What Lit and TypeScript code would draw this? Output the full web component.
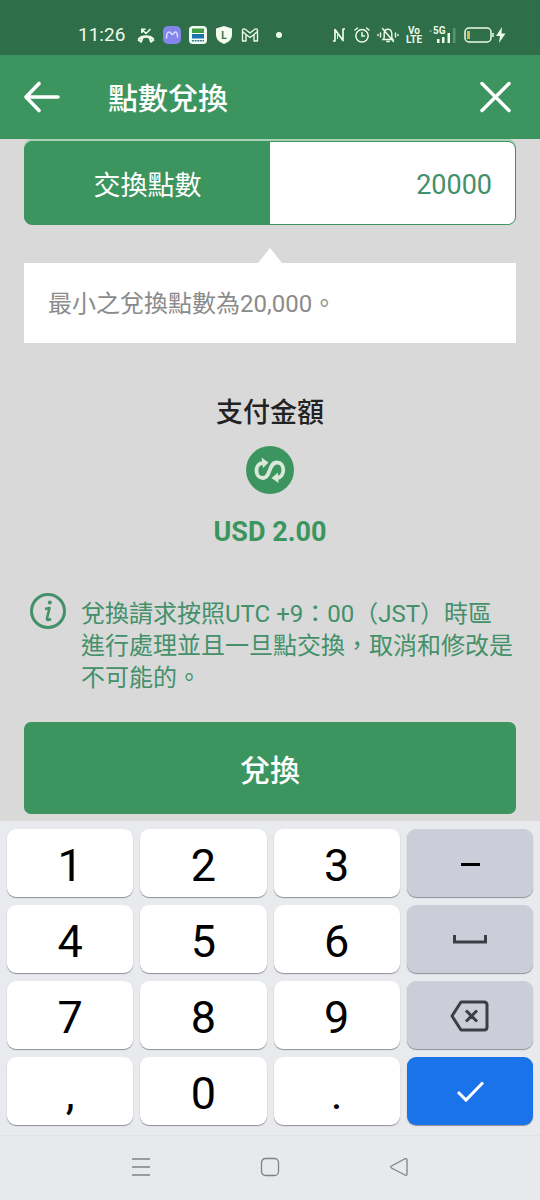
import { LitElement, html, css, svg } from "lit";
import { customElement, state } from "lit/decorators.js";

@customElement("status-bar")
class StatusBar extends LitElement {
  static styles = css`
    :host {
      display: flex;
      align-items: center;
      justify-content: space-between;
      box-sizing: border-box;
      height: 55px;
      padding: 14px 34px 0 78px;
      background: #2e6e48;
      color: #eefbe8;
      font-family: Roboto, "Noto Sans", sans-serif;
    }
    .group {
      display: flex;
      align-items: center;
      gap: 8px;
    }
    .time {
      font-size: 19px;
      line-height: 24px;
      margin-right: 4px;
    }
    .right {
      gap: 7px;
    }
    svg {
      display: block;
      overflow: visible;
    }
    .dot {
      margin-left: 9px;
      width: 6px;
      height: 6px;
      border-radius: 50%;
      background: currentColor;
    }
    .tiny {
      font-size: 10px;
      font-weight: 700;
      font-family: Roboto, sans-serif;
    }
  `;

  render() {
    return html`
      <div class="group">
        <span class="time">11:26</span>
        <svg width="18" height="18" viewBox="0 0 18 18" fill="none" stroke="currentColor" aria-hidden="true">
          <path d="M1.500 13.500 C5 9.500 13 9.500 16.500 13.500" stroke-width="2.600" />
          <path d="M1 13.500 L4 15.800 L5.500 12 M17 13.500 L14 15.800 L12.500 12" stroke-width="2" stroke-linejoin="round" />
          <path d="M13.500 3 L9 7.500 L4.800 3.400 M4.800 7 V3.200 H8.600" stroke-width="1.600" />
        </svg>
        <svg width="18" height="18" viewBox="0 0 18 18" fill="none" aria-hidden="true">
          <rect width="18" height="18" rx="5" fill="#8485ea" />
          <path d="M3.500 12 C3.500 7.500 5 6 6.500 6 C8 6 8 8.500 9.500 8.500 C11 8.500 10.500 6 12.200 6 C14 6 14.500 9 14.500 11" stroke="#d9dcff" stroke-width="1.500" stroke-linecap="round" />
        </svg>
        <svg width="18" height="18" viewBox="0 0 18 18" aria-hidden="true">
          <rect width="18" height="18" rx="4" fill="#f2fbf2" />
          <rect x="3" y="2.500" width="12" height="4.500" fill="#3f9c45" />
          <rect x="3" y="8" width="12" height="4.500" fill="#1c72ae" />
          <path d="M3 14.800 H15" stroke="#3d7f93" stroke-width="1.400" stroke-dasharray="2 .6" />
        </svg>
        <svg width="18" height="18" viewBox="0 0 18 18" aria-hidden="true">
          <path d="M9 0 L17 2.500 V9 C17 13.500 13 16.500 9 18 C5 16.500 1 13.500 1 9 V2.500 Z" fill="#f4fdf0" />
          <text class="tiny" x="9" y="12.500" text-anchor="middle" fill="#2e6e48">L</text>
        </svg>
        <svg width="18" height="18" viewBox="0 0 18 18" fill="none" stroke="currentColor" stroke-width="1.400" stroke-linejoin="round" aria-hidden="true">
          <path d="M1.500 15 V4.500 C1.500 2.500 3.500 2.500 4.500 3.500 L9 7 L13.500 3.500 C14.500 2.500 16.500 2.500 16.500 4.500 V15 H13 V8.500 L9 11.500 L5 8.500 V15 Z M5 8.500 L1.500 5.500 M13 8.500 L16.500 5.500" />
        </svg>
        <span class="dot"></span>
      </div>
      <div class="group right">
        <svg width="14" height="14" viewBox="0 0 14 14" fill="none" stroke="currentColor" stroke-width="1.700" stroke-linejoin="round" aria-hidden="true">
          <path d="M0 13 H2 V1.500 L10 12.500 V1 H12" />
          <path d="M4.500 6.500 V11" stroke-width="1" />
        </svg>
        <svg width="16" height="16" viewBox="0 0 16 16" fill="none" stroke="currentColor" stroke-width="1.500" stroke-linecap="round" aria-hidden="true">
          <circle cx="8" cy="8.800" r="6.200" />
          <path d="M8 5.500 V9 H10.500 M1 3 L3.500 1 M15 3 L12.500 1" />
        </svg>
        <svg width="22" height="16" viewBox="0 0 22 16" fill="none" stroke="currentColor" stroke-width="1.400" stroke-linecap="round" aria-hidden="true">
          <path d="M6 12.500 H16 L14.800 10.500 V6.500 C14.800 3 12.500 2.300 11 2.300 C9.500 2.300 7.200 3 7.200 6.500 V10.500 Z M9.800 14.500 H12.200 M5.500 1.500 L16.500 14.500 M3.500 6 V10 M1 7.500 V8.500 M18.500 6 V10 M21 7.500 V8.500" />
        </svg>
        <svg width="16" height="18" viewBox="0 0 16 18" fill="currentColor" aria-hidden="true">
          <text class="tiny" x="8" y="8" text-anchor="middle">Vo</text>
          <text class="tiny" x="8" y="17" text-anchor="middle">LTE</text>
        </svg>
        <svg width="28" height="18" viewBox="0 0 28 18" fill="currentColor" aria-hidden="true">
          <text class="tiny" x="4" y="8">5G</text>
          <path d="M8 13 h2.500 v4 h-2.500 z M13 11 h2.500 v6 h-2.500 z M18.500 7 h2.500 v10 h-2.500 z" />
          <path d="M24 2 h2.500 v15 h-2.500 z M0 4 h3 v2 h-3 z" opacity=".25" />
        </svg>
        <svg width="42" height="16" viewBox="0 0 42 16" fill="none" aria-hidden="true">
          <rect x="1" y="1" width="26" height="14" rx="4" stroke="currentColor" stroke-width="1.500" />
          <rect x="3" y="4" width="3" height="8" fill="#d9b45c" />
          <path d="M29 6 V10" stroke="currentColor" stroke-width="1.500" />
          <path d="M38 0 L32 9 H36 L35 16 L41.500 6.500 H37.500 Z" fill="currentColor" />
        </svg>
      </div>
    `;
  }
}

type Key = { id: string; label: string; kind: "digit" | "side" | "enter" };

const KEYS: Key[] = [
  { id: "1", label: "1", kind: "digit" },
  { id: "2", label: "2", kind: "digit" },
  { id: "3", label: "3", kind: "digit" },
  { id: "-", label: "", kind: "side" },
  { id: "4", label: "4", kind: "digit" },
  { id: "5", label: "5", kind: "digit" },
  { id: "6", label: "6", kind: "digit" },
  { id: "space", label: "", kind: "side" },
  { id: "7", label: "7", kind: "digit" },
  { id: "8", label: "8", kind: "digit" },
  { id: "9", label: "9", kind: "digit" },
  { id: "backspace", label: "", kind: "side" },
  { id: ",", label: ",", kind: "digit" },
  { id: "0", label: "0", kind: "digit" },
  { id: ".", label: ".", kind: "digit" },
  { id: "enter", label: "", kind: "enter" },
];

const KEY_ICONS: Record<string, unknown> = {
  "-": svg`<path d="M12 22.500 H31" stroke="#000" stroke-width="3" />`,
  space: svg`<path d="M5.500 17 V24 H36.500 V17" stroke="#3b3e44" stroke-width="3" />`,
  backspace: svg`<path d="M12 8 H35 Q38 8 38 11 V33 Q38 36 35 36 H12 L3 22 Z M17 16.500 L28 27.500 M28 16.500 L17 27.500" stroke="#3b3e44" stroke-width="3" stroke-linejoin="round" />`,
  enter: svg`<path d="M9 22 L17 30 L34 12.500" stroke="#fff" stroke-width="3" />`,
};

@customElement("number-pad")
class NumberPad extends LitElement {
  static styles = css`
    :host {
      display: grid;
      grid-template-columns: repeat(4, minmax(0, 1fr));
      grid-auto-rows: 68px;
      gap: 8px 7px;
      padding: 8px 7px 10px;
      background: #e9eaed;
    }
    .key {
      display: flex;
      align-items: center;
      justify-content: center;
      margin: 0;
      padding: 5px 0 0;
      border: 0;
      border-radius: 9px;
      background: #fff;
      box-shadow: 0 1px 1px #8f9196;
      color: #000;
      font: 400 45px/60px Roboto, "Noto Sans", sans-serif;
    }
    .side {
      background: #cbced8;
      padding: 0;
    }
    .enter {
      background: #1a73e8;
      padding: 0;
    }
    svg {
      display: block;
    }
  `;

  private press(id: string) {
    this.dispatchEvent(new CustomEvent("key-press", { detail: id }));
  }

  render() {
    return KEYS.map(
      (k) => html`<button class="key ${k.kind}" type="button" aria-label=${k.id} @click=${() => this.press(k.id)}>
        ${KEY_ICONS[k.id]
          ? html`<svg width="42" height="42" viewBox="0 0 42 42" fill="none" aria-hidden="true">${KEY_ICONS[k.id]}</svg>`
          : k.label}
      </button>`
    );
  }
}

@customElement("app-root")
class AppRoot extends LitElement {
  static styles = css`
    :host {
      display: flex;
      flex-direction: column;
      min-height: 100vh;
      background: #d9d9d9;
      font-family: Roboto, "Noto Sans CJK TC", sans-serif;
      text-spacing-trim: space-all;
    }
    svg {
      display: block;
      flex: none;
    }
    button {
      font-family: inherit;
      border: 0;
      margin: 0;
      padding: 0;
    }
    .app-bar {
      display: flex;
      align-items: center;
      height: 84px;
      padding: 0 27px 0 24px;
      background: #3c955e;
      color: #fff;
    }
    .icon-button {
      background: none;
      color: inherit;
    }
    .title {
      flex: 1;
      margin: 0 0 0 48px;
      padding-top: 4px;
      font-size: 30px;
      line-height: 44px;
      font-weight: 500;
    }
    .content {
      flex: 1;
      display: flex;
      flex-direction: column;
      padding: 0 24px 7px;
    }
    .field {
      display: flex;
      height: 84px;
      box-sizing: border-box;
      border: 1px solid #3c955e;
      border-radius: 8px;
      background: #3c955e;
      box-shadow: 0 -2px 0 #a9d3b6;
      margin-top: 2px;
    }
    .field-label,
    .field-input {
      width: 50%;
      min-width: 0;
      box-sizing: border-box;
      font-size: 27px;
      line-height: 40px;
    }
    .field-label {
      display: flex;
      align-items: center;
      justify-content: center;
      padding-top: 5px;
      color: #fff;
    }
    .field-input {
      border: 0;
      border-radius: 0 7px 7px 0;
      padding: 4px 23px 0;
      outline: 0;
      background: #fff;
      color: #43906a;
      text-align: right;
      font-family: inherit;
    }
    .note {
      margin: 23px 0 0;
      display: flex;
      flex-direction: column;
    }
    .pointer {
      align-self: center;
      border: 12px solid transparent;
      border-top: 0;
      border-bottom: 15px solid #fff;
    }
    .note-text {
      margin: 0;
      padding: 25px 24px 23px;
      background: #fff;
      color: #8b8b8b;
      font-size: 24px;
      line-height: 32px;
    }
    .payment {
      display: flex;
      flex-direction: column;
      align-items: center;
      margin-top: 50px;
    }
    .payment-title {
      margin: 0 0 13px;
      color: #222;
      font-size: 27px;
      line-height: 40px;
      font-weight: 500;
    }
    .amount {
      margin: 18px 0 0;
      color: #3c955e;
      font-size: 27px;
      line-height: 40px;
      font-weight: 700;
    }
    .notice {
      display: flex;
      gap: 15px;
      margin: 41px 3px 0 6px;
      color: #43906a;
    }
    .notice-text {
      flex: 1;
      margin: 5px 0 0;
      font-size: 24px;
      line-height: 32px;
    }
    .submit {
      margin-top: 28px;
      height: 92px;
      padding-top: 5px;
      border-radius: 7px;
      background: #3c955e;
      color: #fff;
      font-size: 30px;
      line-height: 44px;
      font-weight: 500;
    }
    .nav {
      display: flex;
      justify-content: space-around;
      align-items: center;
      height: 61px;
      padding: 0 76px 4px;
      background: #e8e9ed;
      border-top: 1px solid #e1e2e5;
      color: #808185;
    }
  `;

  @state() private points = "20000";

  private onKey(e: CustomEvent<string>) {
    const id = e.detail;
    if (id === "backspace") this.points = this.points.slice(0, -1);
    else if (/^\d$/.test(id)) this.points += id;
  }

  private get amount() {
    return (Number(this.points || 0) / 10000).toFixed(2);
  }

  render() {
    return html`
      <status-bar></status-bar>
      <header class="app-bar">
        <button class="icon-button" type="button" aria-label="返回">
          <svg width="36" height="32" viewBox="0 0 36 32" fill="none" stroke="currentColor" stroke-width="3.600" stroke-linecap="round" stroke-linejoin="round">
            <path d="M34 16 H2 M15 2.500 L2 16 L15 29.500" />
          </svg>
        </button>
        <h1 class="title">點數兌換</h1>
        <button class="icon-button" type="button" aria-label="關閉">
          <svg width="36" height="32" viewBox="0 0 36 32" fill="none" stroke="currentColor" stroke-width="3.500" stroke-linecap="round">
            <path d="M5 2.500 L32 29.500 M32 2.500 L5 29.500" />
          </svg>
        </button>
      </header>
      <main class="content">
        <div class="field">
          <label class="field-label" for="points">交換點數</label>
          <input
            class="field-input"
            id="points"
            type="text"
            inputmode="none"
            .value=${this.points}
            @input=${(e: Event) => (this.points = (e.target as HTMLInputElement).value)}
          />
        </div>
        <div class="note">
          <span class="pointer"></span>
          <p class="note-text">最小之兌換點數為20,000。</p>
        </div>
        <section class="payment">
          <h2 class="payment-title">支付金額</h2>
          <svg width="48" height="48" viewBox="0 0 48 48" aria-hidden="true">
            <circle cx="24" cy="24" r="24" fill="#3c955e" />
            <path d="M17 17 C13 17 10.500 20.500 10.500 24.500 C10.500 28.800 13 32 16.800 32 C25 32 22 16.500 31 16.500 C35 16.500 37.300 20 37.300 24 C37.300 28 35 31.500 31 32" fill="none" stroke="#d9e8d9" stroke-width="3.800" />
            <path d="M15.500 11.500 L22.500 16.500 L17 22 Z M32 26.500 L25.500 32 L32.500 37 Z" fill="#d9e8d9" />
          </svg>
          <p class="amount">USD ${this.amount}</p>
        </section>
        <div class="notice">
          <svg width="36" height="38" viewBox="0 0 36 38" fill="none" stroke="currentColor" aria-hidden="true">
            <circle cx="18" cy="18" r="16.500" stroke-width="3" />
            <circle cx="19.800" cy="9.500" r="2" fill="currentColor" stroke="none" />
            <path d="M15 16 L19.500 15 L17 25.500 Q16.500 28 21 26" stroke-width="2.600" stroke-linejoin="round" />
          </svg>
          <p class="notice-text">兌換請求按照UTC +9：00（JST）時區進行處理並且一旦點交換，取消和修改是不可能的。</p>
        </div>
        <button class="submit" type="button">兌換</button>
      </main>
      <number-pad @key-press=${this.onKey}></number-pad>
      <nav class="nav">
        <button class="icon-button" type="button" aria-label="選單">
          <svg width="20" height="20" viewBox="0 0 20 20" fill="none" stroke="currentColor" stroke-width="1.500">
            <path d="M1 2 H19 M1 10 H19 M1 18 H19" />
          </svg>
        </button>
        <button class="icon-button" type="button" aria-label="主畫面">
          <svg width="20" height="20" viewBox="0 0 20 20" fill="none" stroke="currentColor" stroke-width="1.300">
            <rect x="1.500" y="1.500" width="17" height="17" rx="4" />
          </svg>
        </button>
        <button class="icon-button" type="button" aria-label="上一頁">
          <svg width="20" height="20" viewBox="0 0 20 20" fill="none" stroke="currentColor" stroke-width="1.300" stroke-linejoin="round">
            <path d="M16 1.800 Q18 1 18 3 V17 Q18 19 16 18 L2.500 11 Q1 10 2.500 9 Z" />
          </svg>
        </button>
      </nav>
    `;
  }
}
